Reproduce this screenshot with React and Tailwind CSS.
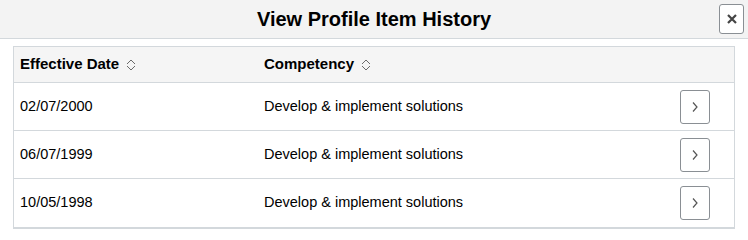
import React from "react"

const rows = [
  { date: "02/07/2000", comp: "Develop & implement solutions" },
  { date: "06/07/1999", comp: "Develop & implement solutions" },
  { date: "10/05/1998", comp: "Develop & implement solutions" },
]

function SortIcon() {
  return (
    <svg width="10" height="12" viewBox="0 0 10 12" className="ml-[7px] text-[#6b6b6b]" fill="none" stroke="currentColor" strokeWidth="1">
      <path d="M1 5 L5 1 L9 5" />
      <path d="M1 7 L5 11 L9 7" />
    </svg>
  )
}

export default function App() {
  return (
    <div className="w-[748px] h-[240px] bg-white font-['Liberation_Sans',Arial,sans-serif] text-[#000]">
      {/* Title bar */}
      <div className="h-[39px] bg-[#f3f3f3] border-b border-[#d3d8dc] flex items-center justify-center relative">
        <h1 className="text-[20px] font-bold text-[#000] leading-none">View Profile Item History</h1>
        <button className="absolute right-[4px] top-[4px] w-[25px] h-[30px] bg-white border border-[#8a8f94] rounded-[3px] flex items-center justify-center">
          <svg width="10" height="10" viewBox="0 0 10 10" stroke="#444" strokeWidth="2.2">
            <path d="M1 1 L9 9 M9 1 L1 9" />
          </svg>
        </button>
      </div>

      {/* Grid */}
      <div className="mx-[13px] mt-[7px] w-[722px] border border-[#d3d8dc] border-b-2">
        <div className="h-[36px] bg-[#f5f5f5] border-b border-[#d3d8dc] flex items-center text-[15px] font-bold">
          <div className="w-[250px] pl-[6px] flex items-center">
            Effective Date <SortIcon />
          </div>
          <div className="flex items-center">
            Competency <SortIcon />
          </div>
        </div>
        {rows.map((r, i) => (
          <div
            key={i}
            className={`h-[48px] flex items-center text-[14.5px] ${i < rows.length - 1 ? "border-b border-[#d3d8dc]" : ""}`}
          >
            <div className="w-[250px] pl-[6px]">{r.date}</div>
            <div className="flex-1">{r.comp}</div>
            <button className="mr-[24px] w-[30px] h-[34px] bg-white border border-[#8a8f94] rounded-[3px] flex items-center justify-center">
              <svg width="8" height="12" viewBox="0 0 8 12" fill="none" stroke="#555" strokeWidth="1.2">
                <path d="M2 1.5 L6 6 L2 10.5" />
              </svg>
            </button>
          </div>
        ))}
      </div>
    </div>
  )
}
